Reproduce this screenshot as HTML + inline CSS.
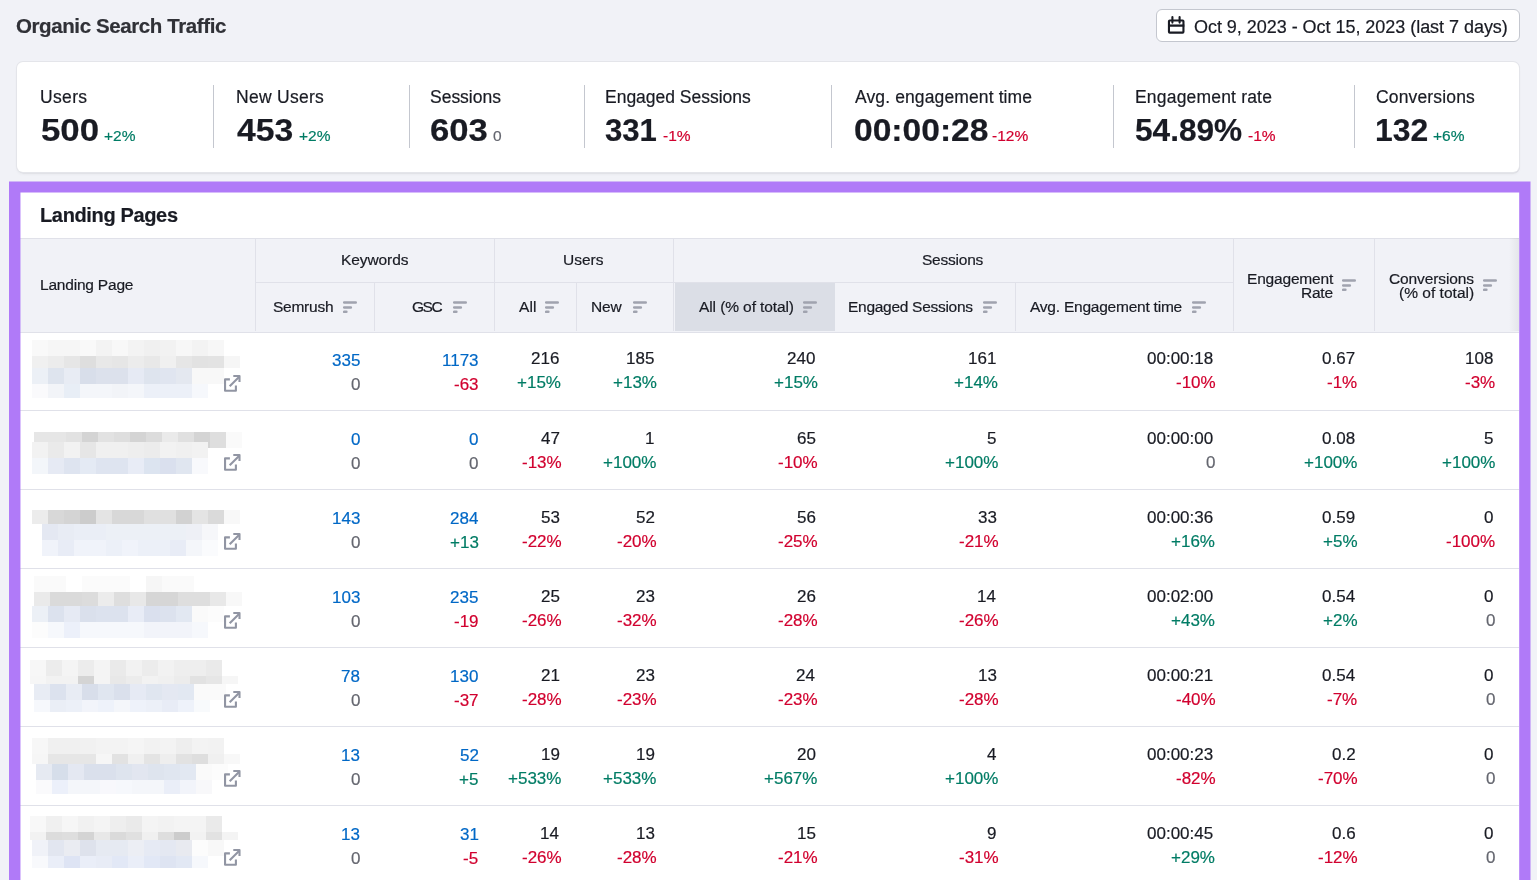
<!DOCTYPE html><html><head><meta charset="utf-8"><style>
html,body{margin:0;padding:0}
body{width:1537px;height:880px;overflow:hidden;position:relative;background:#F1F2F7;font-family:"Liberation Sans",sans-serif}
.a{position:absolute}
.t{position:absolute;white-space:pre;will-change:transform;-webkit-text-stroke:0.2px currentColor}
.bl{display:inline-block;width:0;height:0}
</style></head><body><div class="a" style="left:1156px;top:9px;width:362px;height:31px;border:1px solid #C4C7CF;border-radius:6px;background:#fff"></div><svg class="a" style="left:1162px;top:12px" width="30" height="26" viewBox="0 0 30 26"><g fill="none" stroke="#191B23" stroke-width="2.1"><rect x="6.95" y="8.45" width="14.5" height="12.2" rx="0.8"/><line x1="6.2" y1="13.6" x2="22.3" y2="13.6" stroke-width="2.3"/><line x1="10.4" y1="5" x2="10.4" y2="10.6" stroke-linecap="round"/><line x1="17.6" y1="5" x2="17.6" y2="10.6" stroke-linecap="round"/></g></svg><div class="a" style="left:17px;top:62px;width:1502px;height:110px;border-radius:6px;background:#fff;box-shadow:0 0 0 1px #E4E5EA,0.5px 1px 0 0.5px #D9DAE0,0 2px 3px rgba(25,27,35,.06)"></div><div class="a" style="left:213px;top:85px;width:1px;height:63px;background:#C4C7CF"></div><div class="a" style="left:408.5px;top:85px;width:1px;height:63px;background:#C4C7CF"></div><div class="a" style="left:583.5px;top:85px;width:1px;height:63px;background:#C4C7CF"></div><div class="a" style="left:831px;top:85px;width:1px;height:63px;background:#C4C7CF"></div><div class="a" style="left:1112.5px;top:85px;width:1px;height:63px;background:#C4C7CF"></div><div class="a" style="left:1353.5px;top:85px;width:1px;height:63px;background:#C4C7CF"></div><div class="a" style="left:20px;top:192px;width:1500px;height:700px;background:#fff"></div><div class="a" style="left:20px;top:237.5px;width:1499px;height:93px;background:#F1F2F7;border-top:1px solid #E0E1E9;border-bottom:1px solid #E0E1E9"></div><div class="a" style="left:675px;top:283px;width:160px;height:48px;background:#DBDEE6"></div><div class="a" style="left:1509px;top:238px;width:10px;height:93px;background:linear-gradient(to right,rgba(25,27,35,0),rgba(25,27,35,0.06))"></div><div class="a" style="left:256px;top:282px;width:977px;height:1px;background:#E0E1E9"></div><div class="a" style="left:255.0px;top:238px;width:1px;height:93px;background:#E0E1E9"></div><div class="a" style="left:493.5px;top:238px;width:1px;height:93px;background:#E0E1E9"></div><div class="a" style="left:673.0px;top:238px;width:1px;height:93px;background:#E0E1E9"></div><div class="a" style="left:1232.5px;top:238px;width:1px;height:93px;background:#E0E1E9"></div><div class="a" style="left:1373.5px;top:238px;width:1px;height:93px;background:#E0E1E9"></div><div class="a" style="left:374.0px;top:283px;width:1px;height:48px;background:#E0E1E9"></div><div class="a" style="left:576.0px;top:283px;width:1px;height:48px;background:#E0E1E9"></div><div class="a" style="left:1015.0px;top:283px;width:1px;height:48px;background:#E0E1E9"></div><svg class="a" style="left:343px;top:301px" width="15" height="13" viewBox="0 0 15 13"><g stroke="#A0A3AF" stroke-width="2.5" stroke-linecap="round"><line x1="1.15" y1="1.45" x2="12.75" y2="1.45"/><line x1="1.15" y1="6.4" x2="7.85" y2="6.4"/><line x1="1.15" y1="10.8" x2="3.4" y2="10.8"/></g></svg><svg class="a" style="left:452.8px;top:301px" width="15" height="13" viewBox="0 0 15 13"><g stroke="#A0A3AF" stroke-width="2.5" stroke-linecap="round"><line x1="1.15" y1="1.45" x2="12.75" y2="1.45"/><line x1="1.15" y1="6.4" x2="7.85" y2="6.4"/><line x1="1.15" y1="10.8" x2="3.4" y2="10.8"/></g></svg><svg class="a" style="left:545px;top:301px" width="15" height="13" viewBox="0 0 15 13"><g stroke="#A0A3AF" stroke-width="2.5" stroke-linecap="round"><line x1="1.15" y1="1.45" x2="12.75" y2="1.45"/><line x1="1.15" y1="6.4" x2="7.85" y2="6.4"/><line x1="1.15" y1="10.8" x2="3.4" y2="10.8"/></g></svg><svg class="a" style="left:632.5px;top:301px" width="15" height="13" viewBox="0 0 15 13"><g stroke="#A0A3AF" stroke-width="2.5" stroke-linecap="round"><line x1="1.15" y1="1.45" x2="12.75" y2="1.45"/><line x1="1.15" y1="6.4" x2="7.85" y2="6.4"/><line x1="1.15" y1="10.8" x2="3.4" y2="10.8"/></g></svg><svg class="a" style="left:802.5px;top:301px" width="15" height="13" viewBox="0 0 15 13"><g stroke="#A0A3AF" stroke-width="2.5" stroke-linecap="round"><line x1="1.15" y1="1.45" x2="12.75" y2="1.45"/><line x1="1.15" y1="6.4" x2="7.85" y2="6.4"/><line x1="1.15" y1="10.8" x2="3.4" y2="10.8"/></g></svg><svg class="a" style="left:983px;top:301px" width="15" height="13" viewBox="0 0 15 13"><g stroke="#A0A3AF" stroke-width="2.5" stroke-linecap="round"><line x1="1.15" y1="1.45" x2="12.75" y2="1.45"/><line x1="1.15" y1="6.4" x2="7.85" y2="6.4"/><line x1="1.15" y1="10.8" x2="3.4" y2="10.8"/></g></svg><svg class="a" style="left:1191.5px;top:301px" width="15" height="13" viewBox="0 0 15 13"><g stroke="#A0A3AF" stroke-width="2.5" stroke-linecap="round"><line x1="1.15" y1="1.45" x2="12.75" y2="1.45"/><line x1="1.15" y1="6.4" x2="7.85" y2="6.4"/><line x1="1.15" y1="10.8" x2="3.4" y2="10.8"/></g></svg><svg class="a" style="left:1342px;top:279.4px" width="15" height="13" viewBox="0 0 15 13"><g stroke="#A0A3AF" stroke-width="2.5" stroke-linecap="round"><line x1="1.15" y1="1.45" x2="12.75" y2="1.45"/><line x1="1.15" y1="6.4" x2="7.85" y2="6.4"/><line x1="1.15" y1="10.8" x2="3.4" y2="10.8"/></g></svg><svg class="a" style="left:1482.7px;top:279.4px" width="15" height="13" viewBox="0 0 15 13"><g stroke="#A0A3AF" stroke-width="2.5" stroke-linecap="round"><line x1="1.15" y1="1.45" x2="12.75" y2="1.45"/><line x1="1.15" y1="6.4" x2="7.85" y2="6.4"/><line x1="1.15" y1="10.8" x2="3.4" y2="10.8"/></g></svg><div class="a" style="left:20px;top:410px;width:1499px;height:1px;background:#E0E1E9"></div><div class="a" style="left:32px;top:340px;width:16px;height:16px;background:rgb(249, 249, 249)"></div><div class="a" style="left:48px;top:340px;width:16px;height:16px;background:rgb(246, 246, 246)"></div><div class="a" style="left:64px;top:340px;width:16px;height:16px;background:rgb(246, 246, 246)"></div><div class="a" style="left:80px;top:340px;width:16px;height:16px;background:rgb(249, 249, 249)"></div><div class="a" style="left:96px;top:340px;width:16px;height:16px;background:rgb(243, 243, 243)"></div><div class="a" style="left:112px;top:340px;width:16px;height:16px;background:rgb(248, 248, 248)"></div><div class="a" style="left:128px;top:340px;width:16px;height:16px;background:rgb(243, 243, 243)"></div><div class="a" style="left:144px;top:340px;width:16px;height:16px;background:rgb(240, 240, 240)"></div><div class="a" style="left:160px;top:340px;width:16px;height:16px;background:rgb(242, 242, 242)"></div><div class="a" style="left:176px;top:340px;width:16px;height:16px;background:rgb(247, 247, 247)"></div><div class="a" style="left:192px;top:340px;width:16px;height:16px;background:rgb(243, 243, 243)"></div><div class="a" style="left:208px;top:340px;width:16px;height:16px;background:rgb(247, 247, 247)"></div><div class="a" style="left:32px;top:356px;width:16px;height:12px;background:rgb(240, 240, 240)"></div><div class="a" style="left:48px;top:356px;width:16px;height:12px;background:rgb(236, 236, 236)"></div><div class="a" style="left:64px;top:356px;width:16px;height:12px;background:rgb(230, 230, 230)"></div><div class="a" style="left:80px;top:356px;width:16px;height:12px;background:rgb(222, 222, 222)"></div><div class="a" style="left:96px;top:356px;width:16px;height:12px;background:rgb(232, 232, 232)"></div><div class="a" style="left:112px;top:356px;width:16px;height:12px;background:rgb(230, 230, 230)"></div><div class="a" style="left:128px;top:356px;width:16px;height:12px;background:rgb(236, 236, 236)"></div><div class="a" style="left:144px;top:356px;width:16px;height:12px;background:rgb(232, 232, 232)"></div><div class="a" style="left:160px;top:356px;width:16px;height:12px;background:rgb(240, 240, 240)"></div><div class="a" style="left:176px;top:356px;width:16px;height:12px;background:rgb(230, 230, 230)"></div><div class="a" style="left:192px;top:356px;width:16px;height:12px;background:rgb(226, 226, 226)"></div><div class="a" style="left:208px;top:356px;width:16px;height:12px;background:rgb(227, 227, 227)"></div><div class="a" style="left:224px;top:356px;width:16px;height:12px;background:rgb(246, 246, 246)"></div><div class="a" style="left:32px;top:368px;width:16px;height:16px;background:rgb(236, 240, 246)"></div><div class="a" style="left:48px;top:368px;width:16px;height:16px;background:rgb(222, 228, 238)"></div><div class="a" style="left:64px;top:368px;width:16px;height:16px;background:rgb(232, 236, 244)"></div><div class="a" style="left:80px;top:368px;width:16px;height:16px;background:rgb(216, 222, 234)"></div><div class="a" style="left:96px;top:368px;width:16px;height:16px;background:rgb(220, 225, 236)"></div><div class="a" style="left:112px;top:368px;width:16px;height:16px;background:rgb(220, 225, 236)"></div><div class="a" style="left:128px;top:368px;width:16px;height:16px;background:rgb(230, 234, 244)"></div><div class="a" style="left:144px;top:368px;width:16px;height:16px;background:rgb(222, 228, 238)"></div><div class="a" style="left:160px;top:368px;width:16px;height:16px;background:rgb(224, 229, 240)"></div><div class="a" style="left:176px;top:368px;width:16px;height:16px;background:rgb(228, 232, 240)"></div><div class="a" style="left:192px;top:368px;width:16px;height:16px;background:rgb(248, 248, 248)"></div><div class="a" style="left:208px;top:368px;width:16px;height:16px;background:rgb(248, 248, 248)"></div><div class="a" style="left:32px;top:384px;width:16px;height:14px;background:rgb(250, 250, 252)"></div><div class="a" style="left:48px;top:384px;width:16px;height:14px;background:rgb(242, 244, 248)"></div><div class="a" style="left:64px;top:384px;width:16px;height:14px;background:rgb(232, 238, 246)"></div><div class="a" style="left:80px;top:384px;width:16px;height:14px;background:rgb(244, 246, 250)"></div><div class="a" style="left:96px;top:384px;width:16px;height:14px;background:rgb(244, 246, 250)"></div><div class="a" style="left:112px;top:384px;width:16px;height:14px;background:rgb(242, 244, 248)"></div><div class="a" style="left:128px;top:384px;width:16px;height:14px;background:rgb(244, 246, 250)"></div><div class="a" style="left:144px;top:384px;width:16px;height:14px;background:rgb(236, 240, 248)"></div><div class="a" style="left:160px;top:384px;width:16px;height:14px;background:rgb(236, 240, 248)"></div><div class="a" style="left:176px;top:384px;width:16px;height:14px;background:rgb(236, 240, 248)"></div><div class="a" style="left:192px;top:384px;width:16px;height:14px;background:rgb(246, 248, 252)"></div><svg class="a" style="left:218px;top:368px" width="30" height="30" viewBox="0 0 30 30"><g fill="none" stroke="#9195A3" stroke-width="2.1" stroke-linejoin="round"><path d="M11.9 11.4H7.05V22.7H17.9V17.6"/><path d="M11.7 18.2L21 8.9"/><path d="M15.3 8H21.5V14.1"/></g></svg><div class="a" style="left:20px;top:489px;width:1499px;height:1px;background:#E0E1E9"></div><div class="a" style="left:34px;top:432px;width:16px;height:16px;background:rgb(230, 230, 230)"></div><div class="a" style="left:50px;top:432px;width:16px;height:16px;background:rgb(230, 230, 230)"></div><div class="a" style="left:66px;top:432px;width:16px;height:16px;background:rgb(226, 226, 226)"></div><div class="a" style="left:82px;top:432px;width:16px;height:16px;background:rgb(212, 212, 212)"></div><div class="a" style="left:98px;top:432px;width:16px;height:16px;background:rgb(226, 226, 226)"></div><div class="a" style="left:114px;top:432px;width:16px;height:16px;background:rgb(222, 222, 222)"></div><div class="a" style="left:130px;top:432px;width:16px;height:16px;background:rgb(212, 212, 212)"></div><div class="a" style="left:146px;top:432px;width:16px;height:16px;background:rgb(220, 220, 220)"></div><div class="a" style="left:162px;top:432px;width:16px;height:16px;background:rgb(234, 234, 234)"></div><div class="a" style="left:178px;top:432px;width:16px;height:16px;background:rgb(224, 224, 224)"></div><div class="a" style="left:194px;top:432px;width:16px;height:16px;background:rgb(212, 212, 212)"></div><div class="a" style="left:210px;top:432px;width:16px;height:16px;background:rgb(222, 222, 222)"></div><div class="a" style="left:226px;top:432px;width:16px;height:16px;background:rgb(250, 250, 250)"></div><div class="a" style="left:32px;top:442px;width:16px;height:16px;background:rgb(242, 242, 242)"></div><div class="a" style="left:48px;top:442px;width:16px;height:16px;background:rgb(234, 234, 234)"></div><div class="a" style="left:64px;top:442px;width:16px;height:16px;background:rgb(242, 242, 242)"></div><div class="a" style="left:80px;top:442px;width:16px;height:16px;background:rgb(230, 230, 230)"></div><div class="a" style="left:96px;top:442px;width:16px;height:16px;background:rgb(240, 240, 240)"></div><div class="a" style="left:112px;top:442px;width:16px;height:16px;background:rgb(240, 240, 240)"></div><div class="a" style="left:128px;top:442px;width:16px;height:16px;background:rgb(238, 238, 238)"></div><div class="a" style="left:144px;top:442px;width:16px;height:16px;background:rgb(236, 236, 236)"></div><div class="a" style="left:160px;top:442px;width:16px;height:16px;background:rgb(242, 242, 242)"></div><div class="a" style="left:176px;top:442px;width:16px;height:16px;background:rgb(240, 240, 240)"></div><div class="a" style="left:192px;top:442px;width:16px;height:16px;background:rgb(242, 242, 242)"></div><div class="a" style="left:32px;top:458px;width:16px;height:16px;background:rgb(243, 246, 250)"></div><div class="a" style="left:48px;top:458px;width:16px;height:16px;background:rgb(230, 234, 244)"></div><div class="a" style="left:64px;top:458px;width:16px;height:16px;background:rgb(222, 228, 240)"></div><div class="a" style="left:80px;top:458px;width:16px;height:16px;background:rgb(228, 234, 244)"></div><div class="a" style="left:96px;top:458px;width:16px;height:16px;background:rgb(222, 228, 240)"></div><div class="a" style="left:112px;top:458px;width:16px;height:16px;background:rgb(222, 228, 240)"></div><div class="a" style="left:128px;top:458px;width:16px;height:16px;background:rgb(232, 236, 246)"></div><div class="a" style="left:144px;top:458px;width:16px;height:16px;background:rgb(220, 228, 240)"></div><div class="a" style="left:160px;top:458px;width:16px;height:16px;background:rgb(218, 224, 238)"></div><div class="a" style="left:176px;top:458px;width:16px;height:16px;background:rgb(224, 230, 240)"></div><div class="a" style="left:192px;top:458px;width:16px;height:16px;background:rgb(248, 249, 252)"></div><svg class="a" style="left:218px;top:447px" width="30" height="30" viewBox="0 0 30 30"><g fill="none" stroke="#9195A3" stroke-width="2.1" stroke-linejoin="round"><path d="M11.9 11.4H7.05V22.7H17.9V17.6"/><path d="M11.7 18.2L21 8.9"/><path d="M15.3 8H21.5V14.1"/></g></svg><div class="a" style="left:20px;top:568px;width:1499px;height:1px;background:#E0E1E9"></div><div class="a" style="left:32px;top:510px;width:16px;height:14px;background:rgb(236, 236, 236)"></div><div class="a" style="left:48px;top:510px;width:16px;height:14px;background:rgb(216, 216, 216)"></div><div class="a" style="left:64px;top:510px;width:16px;height:14px;background:rgb(212, 212, 212)"></div><div class="a" style="left:80px;top:510px;width:16px;height:14px;background:rgb(204, 204, 204)"></div><div class="a" style="left:96px;top:510px;width:16px;height:14px;background:rgb(228, 228, 228)"></div><div class="a" style="left:112px;top:510px;width:16px;height:14px;background:rgb(216, 216, 216)"></div><div class="a" style="left:128px;top:510px;width:16px;height:14px;background:rgb(216, 216, 216)"></div><div class="a" style="left:144px;top:510px;width:16px;height:14px;background:rgb(224, 224, 224)"></div><div class="a" style="left:160px;top:510px;width:16px;height:14px;background:rgb(224, 224, 224)"></div><div class="a" style="left:176px;top:510px;width:16px;height:14px;background:rgb(210, 210, 210)"></div><div class="a" style="left:192px;top:510px;width:16px;height:14px;background:rgb(228, 228, 228)"></div><div class="a" style="left:208px;top:510px;width:16px;height:14px;background:rgb(218, 218, 218)"></div><div class="a" style="left:224px;top:510px;width:16px;height:14px;background:rgb(248, 248, 248)"></div><div class="a" style="left:42px;top:524px;width:16px;height:16px;background:rgb(228, 232, 242)"></div><div class="a" style="left:58px;top:524px;width:16px;height:16px;background:rgb(232, 236, 244)"></div><div class="a" style="left:74px;top:524px;width:16px;height:16px;background:rgb(234, 238, 246)"></div><div class="a" style="left:90px;top:524px;width:16px;height:16px;background:rgb(234, 238, 246)"></div><div class="a" style="left:106px;top:524px;width:16px;height:16px;background:rgb(236, 240, 246)"></div><div class="a" style="left:122px;top:524px;width:16px;height:16px;background:rgb(236, 240, 246)"></div><div class="a" style="left:138px;top:524px;width:16px;height:16px;background:rgb(236, 240, 246)"></div><div class="a" style="left:154px;top:524px;width:16px;height:16px;background:rgb(236, 240, 246)"></div><div class="a" style="left:170px;top:524px;width:16px;height:16px;background:rgb(236, 240, 246)"></div><div class="a" style="left:186px;top:524px;width:16px;height:16px;background:rgb(238, 240, 246)"></div><div class="a" style="left:202px;top:524px;width:16px;height:16px;background:rgb(246, 247, 250)"></div><div class="a" style="left:42px;top:540px;width:16px;height:16px;background:rgb(240, 243, 250)"></div><div class="a" style="left:58px;top:540px;width:16px;height:16px;background:rgb(232, 236, 246)"></div><div class="a" style="left:74px;top:540px;width:16px;height:16px;background:rgb(240, 243, 250)"></div><div class="a" style="left:90px;top:540px;width:16px;height:16px;background:rgb(240, 243, 250)"></div><div class="a" style="left:106px;top:540px;width:16px;height:16px;background:rgb(236, 240, 248)"></div><div class="a" style="left:122px;top:540px;width:16px;height:16px;background:rgb(240, 243, 250)"></div><div class="a" style="left:138px;top:540px;width:16px;height:16px;background:rgb(236, 240, 248)"></div><div class="a" style="left:154px;top:540px;width:16px;height:16px;background:rgb(236, 240, 248)"></div><div class="a" style="left:170px;top:540px;width:16px;height:16px;background:rgb(232, 236, 246)"></div><div class="a" style="left:186px;top:540px;width:16px;height:16px;background:rgb(244, 246, 250)"></div><div class="a" style="left:202px;top:540px;width:16px;height:16px;background:rgb(250, 251, 253)"></div><svg class="a" style="left:218px;top:526px" width="30" height="30" viewBox="0 0 30 30"><g fill="none" stroke="#9195A3" stroke-width="2.1" stroke-linejoin="round"><path d="M11.9 11.4H7.05V22.7H17.9V17.6"/><path d="M11.7 18.2L21 8.9"/><path d="M15.3 8H21.5V14.1"/></g></svg><div class="a" style="left:20px;top:647px;width:1499px;height:1px;background:#E0E1E9"></div><div class="a" style="left:34px;top:576px;width:16px;height:16px;background:rgb(250, 250, 250)"></div><div class="a" style="left:50px;top:576px;width:16px;height:16px;background:rgb(250, 250, 250)"></div><div class="a" style="left:66px;top:576px;width:16px;height:16px;background:rgb(255, 255, 255)"></div><div class="a" style="left:82px;top:576px;width:16px;height:16px;background:rgb(251, 251, 251)"></div><div class="a" style="left:98px;top:576px;width:16px;height:16px;background:rgb(251, 251, 251)"></div><div class="a" style="left:114px;top:576px;width:16px;height:16px;background:rgb(251, 251, 251)"></div><div class="a" style="left:130px;top:576px;width:16px;height:16px;background:rgb(255, 255, 255)"></div><div class="a" style="left:146px;top:576px;width:16px;height:16px;background:rgb(246, 246, 246)"></div><div class="a" style="left:162px;top:576px;width:16px;height:16px;background:rgb(250, 250, 250)"></div><div class="a" style="left:178px;top:576px;width:16px;height:16px;background:rgb(250, 250, 250)"></div><div class="a" style="left:194px;top:576px;width:16px;height:16px;background:rgb(255, 255, 255)"></div><div class="a" style="left:210px;top:576px;width:16px;height:16px;background:rgb(255, 255, 255)"></div><div class="a" style="left:34px;top:592px;width:16px;height:14px;background:rgb(234, 234, 234)"></div><div class="a" style="left:50px;top:592px;width:16px;height:14px;background:rgb(218, 218, 218)"></div><div class="a" style="left:66px;top:592px;width:16px;height:14px;background:rgb(218, 218, 218)"></div><div class="a" style="left:82px;top:592px;width:16px;height:14px;background:rgb(220, 220, 220)"></div><div class="a" style="left:98px;top:592px;width:16px;height:14px;background:rgb(236, 236, 236)"></div><div class="a" style="left:114px;top:592px;width:16px;height:14px;background:rgb(222, 222, 222)"></div><div class="a" style="left:130px;top:592px;width:16px;height:14px;background:rgb(232, 232, 232)"></div><div class="a" style="left:146px;top:592px;width:16px;height:14px;background:rgb(214, 214, 214)"></div><div class="a" style="left:162px;top:592px;width:16px;height:14px;background:rgb(214, 214, 214)"></div><div class="a" style="left:178px;top:592px;width:16px;height:14px;background:rgb(222, 222, 222)"></div><div class="a" style="left:194px;top:592px;width:16px;height:14px;background:rgb(222, 222, 222)"></div><div class="a" style="left:210px;top:592px;width:16px;height:14px;background:rgb(232, 232, 232)"></div><div class="a" style="left:226px;top:592px;width:16px;height:14px;background:rgb(248, 248, 248)"></div><div class="a" style="left:32px;top:606px;width:16px;height:16px;background:rgb(236, 240, 246)"></div><div class="a" style="left:48px;top:606px;width:16px;height:16px;background:rgb(220, 226, 238)"></div><div class="a" style="left:64px;top:606px;width:16px;height:16px;background:rgb(230, 234, 244)"></div><div class="a" style="left:80px;top:606px;width:16px;height:16px;background:rgb(218, 224, 236)"></div><div class="a" style="left:96px;top:606px;width:16px;height:16px;background:rgb(220, 226, 238)"></div><div class="a" style="left:112px;top:606px;width:16px;height:16px;background:rgb(220, 226, 238)"></div><div class="a" style="left:128px;top:606px;width:16px;height:16px;background:rgb(232, 236, 246)"></div><div class="a" style="left:144px;top:606px;width:16px;height:16px;background:rgb(218, 224, 238)"></div><div class="a" style="left:160px;top:606px;width:16px;height:16px;background:rgb(220, 226, 238)"></div><div class="a" style="left:176px;top:606px;width:16px;height:16px;background:rgb(226, 232, 242)"></div><div class="a" style="left:192px;top:606px;width:16px;height:16px;background:rgb(250, 250, 250)"></div><div class="a" style="left:208px;top:606px;width:16px;height:16px;background:rgb(252, 252, 252)"></div><div class="a" style="left:32px;top:622px;width:16px;height:16px;background:rgb(252, 252, 252)"></div><div class="a" style="left:48px;top:622px;width:16px;height:16px;background:rgb(246, 248, 252)"></div><div class="a" style="left:64px;top:622px;width:16px;height:16px;background:rgb(236, 240, 250)"></div><div class="a" style="left:80px;top:622px;width:16px;height:16px;background:rgb(246, 248, 252)"></div><div class="a" style="left:96px;top:622px;width:16px;height:16px;background:rgb(246, 248, 252)"></div><div class="a" style="left:112px;top:622px;width:16px;height:16px;background:rgb(246, 248, 252)"></div><div class="a" style="left:128px;top:622px;width:16px;height:16px;background:rgb(246, 248, 252)"></div><div class="a" style="left:144px;top:622px;width:16px;height:16px;background:rgb(242, 244, 250)"></div><div class="a" style="left:160px;top:622px;width:16px;height:16px;background:rgb(242, 244, 250)"></div><div class="a" style="left:176px;top:622px;width:16px;height:16px;background:rgb(242, 244, 250)"></div><div class="a" style="left:192px;top:622px;width:16px;height:16px;background:rgb(246, 248, 252)"></div><svg class="a" style="left:218px;top:605px" width="30" height="30" viewBox="0 0 30 30"><g fill="none" stroke="#9195A3" stroke-width="2.1" stroke-linejoin="round"><path d="M11.9 11.4H7.05V22.7H17.9V17.6"/><path d="M11.7 18.2L21 8.9"/><path d="M15.3 8H21.5V14.1"/></g></svg><div class="a" style="left:20px;top:726px;width:1499px;height:1px;background:#E0E1E9"></div><div class="a" style="left:30px;top:660px;width:16px;height:16px;background:rgb(247, 247, 247)"></div><div class="a" style="left:46px;top:660px;width:16px;height:16px;background:rgb(236, 236, 236)"></div><div class="a" style="left:62px;top:660px;width:16px;height:16px;background:rgb(244, 244, 244)"></div><div class="a" style="left:78px;top:660px;width:16px;height:16px;background:rgb(236, 236, 236)"></div><div class="a" style="left:94px;top:660px;width:16px;height:16px;background:rgb(244, 244, 244)"></div><div class="a" style="left:110px;top:660px;width:16px;height:16px;background:rgb(234, 234, 234)"></div><div class="a" style="left:126px;top:660px;width:16px;height:16px;background:rgb(242, 242, 242)"></div><div class="a" style="left:142px;top:660px;width:16px;height:16px;background:rgb(236, 236, 236)"></div><div class="a" style="left:158px;top:660px;width:16px;height:16px;background:rgb(242, 242, 242)"></div><div class="a" style="left:174px;top:660px;width:16px;height:16px;background:rgb(238, 238, 238)"></div><div class="a" style="left:190px;top:660px;width:16px;height:16px;background:rgb(238, 238, 238)"></div><div class="a" style="left:206px;top:660px;width:16px;height:16px;background:rgb(234, 234, 234)"></div><div class="a" style="left:30px;top:676px;width:16px;height:8px;background:rgb(246, 246, 246)"></div><div class="a" style="left:46px;top:676px;width:16px;height:8px;background:rgb(242, 242, 242)"></div><div class="a" style="left:62px;top:676px;width:16px;height:8px;background:rgb(242, 242, 242)"></div><div class="a" style="left:78px;top:676px;width:16px;height:8px;background:rgb(212, 212, 212)"></div><div class="a" style="left:94px;top:676px;width:16px;height:8px;background:rgb(244, 244, 244)"></div><div class="a" style="left:110px;top:676px;width:16px;height:8px;background:rgb(232, 232, 232)"></div><div class="a" style="left:126px;top:676px;width:16px;height:8px;background:rgb(236, 236, 236)"></div><div class="a" style="left:142px;top:676px;width:16px;height:8px;background:rgb(242, 242, 242)"></div><div class="a" style="left:158px;top:676px;width:16px;height:8px;background:rgb(240, 240, 240)"></div><div class="a" style="left:174px;top:676px;width:16px;height:8px;background:rgb(236, 236, 236)"></div><div class="a" style="left:190px;top:676px;width:16px;height:8px;background:rgb(226, 226, 226)"></div><div class="a" style="left:206px;top:676px;width:16px;height:8px;background:rgb(230, 230, 230)"></div><div class="a" style="left:222px;top:676px;width:16px;height:8px;background:rgb(246, 246, 246)"></div><div class="a" style="left:34px;top:684px;width:16px;height:16px;background:rgb(232, 236, 244)"></div><div class="a" style="left:50px;top:684px;width:16px;height:16px;background:rgb(220, 226, 238)"></div><div class="a" style="left:66px;top:684px;width:16px;height:16px;background:rgb(232, 236, 244)"></div><div class="a" style="left:82px;top:684px;width:16px;height:16px;background:rgb(216, 222, 234)"></div><div class="a" style="left:98px;top:684px;width:16px;height:16px;background:rgb(224, 230, 240)"></div><div class="a" style="left:114px;top:684px;width:16px;height:16px;background:rgb(218, 224, 236)"></div><div class="a" style="left:130px;top:684px;width:16px;height:16px;background:rgb(230, 234, 244)"></div><div class="a" style="left:146px;top:684px;width:16px;height:16px;background:rgb(224, 230, 240)"></div><div class="a" style="left:162px;top:684px;width:16px;height:16px;background:rgb(228, 232, 242)"></div><div class="a" style="left:178px;top:684px;width:16px;height:16px;background:rgb(226, 232, 242)"></div><div class="a" style="left:194px;top:684px;width:16px;height:16px;background:rgb(250, 250, 250)"></div><div class="a" style="left:210px;top:684px;width:16px;height:16px;background:rgb(250, 250, 250)"></div><div class="a" style="left:34px;top:700px;width:16px;height:12px;background:rgb(246, 248, 252)"></div><div class="a" style="left:50px;top:700px;width:16px;height:12px;background:rgb(234, 238, 246)"></div><div class="a" style="left:66px;top:700px;width:16px;height:12px;background:rgb(236, 240, 248)"></div><div class="a" style="left:82px;top:700px;width:16px;height:12px;background:rgb(242, 244, 250)"></div><div class="a" style="left:98px;top:700px;width:16px;height:12px;background:rgb(238, 242, 250)"></div><div class="a" style="left:114px;top:700px;width:16px;height:12px;background:rgb(244, 246, 250)"></div><div class="a" style="left:130px;top:700px;width:16px;height:12px;background:rgb(238, 242, 250)"></div><div class="a" style="left:146px;top:700px;width:16px;height:12px;background:rgb(236, 240, 248)"></div><div class="a" style="left:162px;top:700px;width:16px;height:12px;background:rgb(232, 236, 246)"></div><div class="a" style="left:178px;top:700px;width:16px;height:12px;background:rgb(238, 242, 250)"></div><div class="a" style="left:194px;top:700px;width:16px;height:12px;background:rgb(248, 250, 252)"></div><svg class="a" style="left:218px;top:684px" width="30" height="30" viewBox="0 0 30 30"><g fill="none" stroke="#9195A3" stroke-width="2.1" stroke-linejoin="round"><path d="M11.9 11.4H7.05V22.7H17.9V17.6"/><path d="M11.7 18.2L21 8.9"/><path d="M15.3 8H21.5V14.1"/></g></svg><div class="a" style="left:20px;top:805px;width:1499px;height:1px;background:#E0E1E9"></div><div class="a" style="left:32px;top:738px;width:16px;height:16px;background:rgb(247, 247, 247)"></div><div class="a" style="left:48px;top:738px;width:16px;height:16px;background:rgb(240, 240, 240)"></div><div class="a" style="left:64px;top:738px;width:16px;height:16px;background:rgb(240, 240, 240)"></div><div class="a" style="left:80px;top:738px;width:16px;height:16px;background:rgb(241, 241, 241)"></div><div class="a" style="left:96px;top:738px;width:16px;height:16px;background:rgb(243, 243, 243)"></div><div class="a" style="left:112px;top:738px;width:16px;height:16px;background:rgb(243, 243, 243)"></div><div class="a" style="left:128px;top:738px;width:16px;height:16px;background:rgb(245, 245, 245)"></div><div class="a" style="left:144px;top:738px;width:16px;height:16px;background:rgb(242, 242, 242)"></div><div class="a" style="left:160px;top:738px;width:16px;height:16px;background:rgb(243, 243, 243)"></div><div class="a" style="left:176px;top:738px;width:16px;height:16px;background:rgb(238, 238, 238)"></div><div class="a" style="left:192px;top:738px;width:16px;height:16px;background:rgb(243, 243, 243)"></div><div class="a" style="left:208px;top:738px;width:16px;height:16px;background:rgb(242, 242, 242)"></div><div class="a" style="left:32px;top:754px;width:16px;height:10px;background:rgb(246, 246, 246)"></div><div class="a" style="left:48px;top:754px;width:16px;height:10px;background:rgb(230, 230, 230)"></div><div class="a" style="left:64px;top:754px;width:16px;height:10px;background:rgb(230, 230, 230)"></div><div class="a" style="left:80px;top:754px;width:16px;height:10px;background:rgb(230, 230, 230)"></div><div class="a" style="left:96px;top:754px;width:16px;height:10px;background:rgb(246, 246, 246)"></div><div class="a" style="left:112px;top:754px;width:16px;height:10px;background:rgb(226, 226, 226)"></div><div class="a" style="left:128px;top:754px;width:16px;height:10px;background:rgb(240, 240, 240)"></div><div class="a" style="left:144px;top:754px;width:16px;height:10px;background:rgb(228, 228, 228)"></div><div class="a" style="left:160px;top:754px;width:16px;height:10px;background:rgb(238, 238, 238)"></div><div class="a" style="left:176px;top:754px;width:16px;height:10px;background:rgb(226, 226, 226)"></div><div class="a" style="left:192px;top:754px;width:16px;height:10px;background:rgb(222, 222, 222)"></div><div class="a" style="left:208px;top:754px;width:16px;height:10px;background:rgb(240, 240, 240)"></div><div class="a" style="left:224px;top:754px;width:16px;height:10px;background:rgb(248, 248, 248)"></div><div class="a" style="left:36px;top:764px;width:16px;height:16px;background:rgb(230, 234, 242)"></div><div class="a" style="left:52px;top:764px;width:16px;height:16px;background:rgb(214, 222, 234)"></div><div class="a" style="left:68px;top:764px;width:16px;height:16px;background:rgb(228, 232, 242)"></div><div class="a" style="left:84px;top:764px;width:16px;height:16px;background:rgb(218, 224, 236)"></div><div class="a" style="left:100px;top:764px;width:16px;height:16px;background:rgb(218, 224, 236)"></div><div class="a" style="left:116px;top:764px;width:16px;height:16px;background:rgb(222, 228, 238)"></div><div class="a" style="left:132px;top:764px;width:16px;height:16px;background:rgb(226, 230, 240)"></div><div class="a" style="left:148px;top:764px;width:16px;height:16px;background:rgb(222, 228, 238)"></div><div class="a" style="left:164px;top:764px;width:16px;height:16px;background:rgb(224, 230, 240)"></div><div class="a" style="left:180px;top:764px;width:16px;height:16px;background:rgb(226, 232, 242)"></div><div class="a" style="left:196px;top:764px;width:16px;height:16px;background:rgb(250, 250, 250)"></div><div class="a" style="left:212px;top:764px;width:16px;height:16px;background:rgb(252, 252, 252)"></div><div class="a" style="left:36px;top:780px;width:16px;height:14px;background:rgb(250, 250, 252)"></div><div class="a" style="left:52px;top:780px;width:16px;height:14px;background:rgb(236, 240, 250)"></div><div class="a" style="left:68px;top:780px;width:16px;height:14px;background:rgb(244, 246, 250)"></div><div class="a" style="left:84px;top:780px;width:16px;height:14px;background:rgb(244, 246, 250)"></div><div class="a" style="left:100px;top:780px;width:16px;height:14px;background:rgb(248, 248, 252)"></div><div class="a" style="left:116px;top:780px;width:16px;height:14px;background:rgb(246, 248, 252)"></div><div class="a" style="left:132px;top:780px;width:16px;height:14px;background:rgb(244, 246, 250)"></div><div class="a" style="left:148px;top:780px;width:16px;height:14px;background:rgb(244, 246, 250)"></div><div class="a" style="left:164px;top:780px;width:16px;height:14px;background:rgb(234, 238, 248)"></div><div class="a" style="left:180px;top:780px;width:16px;height:14px;background:rgb(242, 244, 250)"></div><div class="a" style="left:196px;top:780px;width:16px;height:14px;background:rgb(248, 248, 250)"></div><svg class="a" style="left:218px;top:763px" width="30" height="30" viewBox="0 0 30 30"><g fill="none" stroke="#9195A3" stroke-width="2.1" stroke-linejoin="round"><path d="M11.9 11.4H7.05V22.7H17.9V17.6"/><path d="M11.7 18.2L21 8.9"/><path d="M15.3 8H21.5V14.1"/></g></svg><div class="a" style="left:20px;top:884px;width:1499px;height:1px;background:#E0E1E9"></div><div class="a" style="left:30px;top:816px;width:16px;height:16px;background:rgb(248, 248, 248)"></div><div class="a" style="left:46px;top:816px;width:16px;height:16px;background:rgb(240, 240, 240)"></div><div class="a" style="left:62px;top:816px;width:16px;height:16px;background:rgb(246, 246, 246)"></div><div class="a" style="left:78px;top:816px;width:16px;height:16px;background:rgb(241, 241, 241)"></div><div class="a" style="left:94px;top:816px;width:16px;height:16px;background:rgb(244, 244, 244)"></div><div class="a" style="left:110px;top:816px;width:16px;height:16px;background:rgb(238, 238, 238)"></div><div class="a" style="left:126px;top:816px;width:16px;height:16px;background:rgb(234, 234, 234)"></div><div class="a" style="left:142px;top:816px;width:16px;height:16px;background:rgb(244, 244, 244)"></div><div class="a" style="left:158px;top:816px;width:16px;height:16px;background:rgb(242, 242, 242)"></div><div class="a" style="left:174px;top:816px;width:16px;height:16px;background:rgb(244, 244, 244)"></div><div class="a" style="left:190px;top:816px;width:16px;height:16px;background:rgb(244, 244, 244)"></div><div class="a" style="left:206px;top:816px;width:16px;height:16px;background:rgb(234, 234, 234)"></div><div class="a" style="left:30px;top:832px;width:16px;height:8px;background:rgb(242, 242, 242)"></div><div class="a" style="left:46px;top:832px;width:16px;height:8px;background:rgb(220, 220, 220)"></div><div class="a" style="left:62px;top:832px;width:16px;height:8px;background:rgb(222, 222, 222)"></div><div class="a" style="left:78px;top:832px;width:16px;height:8px;background:rgb(212, 212, 212)"></div><div class="a" style="left:94px;top:832px;width:16px;height:8px;background:rgb(232, 232, 232)"></div><div class="a" style="left:110px;top:832px;width:16px;height:8px;background:rgb(218, 218, 218)"></div><div class="a" style="left:126px;top:832px;width:16px;height:8px;background:rgb(224, 224, 224)"></div><div class="a" style="left:142px;top:832px;width:16px;height:8px;background:rgb(240, 240, 240)"></div><div class="a" style="left:158px;top:832px;width:16px;height:8px;background:rgb(222, 222, 222)"></div><div class="a" style="left:174px;top:832px;width:16px;height:8px;background:rgb(204, 204, 204)"></div><div class="a" style="left:190px;top:832px;width:16px;height:8px;background:rgb(242, 242, 242)"></div><div class="a" style="left:206px;top:832px;width:16px;height:8px;background:rgb(226, 226, 226)"></div><div class="a" style="left:222px;top:832px;width:16px;height:8px;background:rgb(244, 244, 244)"></div><div class="a" style="left:32px;top:840px;width:16px;height:16px;background:rgb(240, 242, 248)"></div><div class="a" style="left:48px;top:840px;width:16px;height:16px;background:rgb(226, 230, 240)"></div><div class="a" style="left:64px;top:840px;width:16px;height:16px;background:rgb(234, 236, 242)"></div><div class="a" style="left:80px;top:840px;width:16px;height:16px;background:rgb(222, 226, 236)"></div><div class="a" style="left:96px;top:840px;width:16px;height:16px;background:rgb(230, 234, 242)"></div><div class="a" style="left:112px;top:840px;width:16px;height:16px;background:rgb(230, 234, 242)"></div><div class="a" style="left:128px;top:840px;width:16px;height:16px;background:rgb(236, 238, 244)"></div><div class="a" style="left:144px;top:840px;width:16px;height:16px;background:rgb(230, 234, 244)"></div><div class="a" style="left:160px;top:840px;width:16px;height:16px;background:rgb(228, 232, 242)"></div><div class="a" style="left:176px;top:840px;width:16px;height:16px;background:rgb(232, 234, 240)"></div><div class="a" style="left:192px;top:840px;width:16px;height:16px;background:rgb(252, 252, 252)"></div><div class="a" style="left:208px;top:840px;width:16px;height:16px;background:rgb(248, 248, 248)"></div><div class="a" style="left:32px;top:856px;width:16px;height:12px;background:rgb(248, 249, 252)"></div><div class="a" style="left:48px;top:856px;width:16px;height:12px;background:rgb(234, 238, 248)"></div><div class="a" style="left:64px;top:856px;width:16px;height:12px;background:rgb(222, 228, 244)"></div><div class="a" style="left:80px;top:856px;width:16px;height:12px;background:rgb(234, 238, 248)"></div><div class="a" style="left:96px;top:856px;width:16px;height:12px;background:rgb(232, 236, 246)"></div><div class="a" style="left:112px;top:856px;width:16px;height:12px;background:rgb(226, 232, 246)"></div><div class="a" style="left:128px;top:856px;width:16px;height:12px;background:rgb(234, 238, 248)"></div><div class="a" style="left:144px;top:856px;width:16px;height:12px;background:rgb(226, 232, 246)"></div><div class="a" style="left:160px;top:856px;width:16px;height:12px;background:rgb(222, 228, 242)"></div><div class="a" style="left:176px;top:856px;width:16px;height:12px;background:rgb(226, 232, 244)"></div><div class="a" style="left:192px;top:856px;width:16px;height:12px;background:rgb(246, 248, 252)"></div><svg class="a" style="left:218px;top:842px" width="30" height="30" viewBox="0 0 30 30"><g fill="none" stroke="#9195A3" stroke-width="2.1" stroke-linejoin="round"><path d="M11.9 11.4H7.05V22.7H17.9V17.6"/><path d="M11.7 18.2L21 8.9"/><path d="M15.3 8H21.5V14.1"/></g></svg><svg class="a" style="left:0;top:0" width="1537" height="880" viewBox="0 0 1537 880"><path fill="#B07AF8" fill-rule="evenodd" d="M9 181.6H1530.5V880H9Z M20.45 192.5H1519.2V880H20.45Z"/></svg><div class="t" id="title" style="top:16.00px;font-size:20.5px;font-weight:bold;color:#303137;line-height:20.5px;letter-spacing:-0.400px;left:15.66px;">Organic Search Traffic<i class="bl"></i></div><div class="t" id="date" style="top:18.00px;font-size:18px;font-weight:normal;color:#191B23;line-height:18px;letter-spacing:-0.034px;left:1193.68px;">Oct 9, 2023 - Oct 15, 2023 (last 7 days)<i class="bl"></i></div><div class="t" id="s0l" style="top:88.82px;font-size:17.5px;font-weight:normal;color:#191B23;line-height:17.5px;letter-spacing:0.339px;left:39.59px;">Users<i class="bl"></i></div><div class="t" id="s0v" style="top:115.01px;font-size:31px;font-weight:bold;color:#191B23;line-height:31px;transform:scaleX(1.1233);transform-origin:0 0;left:40.72px;">500<i class="bl"></i></div><div class="t" id="s0d" style="top:128.01px;font-size:15.5px;font-weight:normal;color:#007C65;line-height:15.5px;left:103.65px;">+2%<i class="bl"></i></div><div class="t" id="s1l" style="top:88.82px;font-size:17.5px;font-weight:normal;color:#191B23;line-height:17.5px;letter-spacing:0.274px;left:235.65px;">New Users<i class="bl"></i></div><div class="t" id="s1v" style="top:115.01px;font-size:31px;font-weight:bold;color:#191B23;line-height:31px;transform:scaleX(1.0869);transform-origin:0 0;left:236.70px;">453<i class="bl"></i></div><div class="t" id="s1d" style="top:128.01px;font-size:15.5px;font-weight:normal;color:#007C65;line-height:15.5px;left:298.63px;">+2%<i class="bl"></i></div><div class="t" id="s2l" style="top:88.82px;font-size:17.5px;font-weight:normal;color:#191B23;line-height:17.5px;letter-spacing:-0.011px;left:429.57px;">Sessions<i class="bl"></i></div><div class="t" id="s2v" style="top:115.01px;font-size:31px;font-weight:bold;color:#191B23;line-height:31px;transform:scaleX(1.1180);transform-origin:0 0;left:429.65px;">603<i class="bl"></i></div><div class="t" id="s2d" style="top:128.01px;font-size:15.5px;font-weight:normal;color:#64666F;line-height:15.5px;left:492.61px;">0<i class="bl"></i></div><div class="t" id="s3l" style="top:88.82px;font-size:17.5px;font-weight:normal;color:#191B23;line-height:17.5px;letter-spacing:-0.015px;left:604.73px;">Engaged Sessions<i class="bl"></i></div><div class="t" id="s3v" style="top:115.01px;font-size:31px;font-weight:bold;color:#191B23;line-height:31px;transform:scaleX(1.0039);transform-origin:0 0;left:604.70px;">331<i class="bl"></i></div><div class="t" id="s3d" style="top:128.01px;font-size:15.5px;font-weight:normal;color:#D1002F;line-height:15.5px;left:662.69px;">-1%<i class="bl"></i></div><div class="t" id="s4l" style="top:88.82px;font-size:17.5px;font-weight:normal;color:#191B23;line-height:17.5px;letter-spacing:0.119px;left:854.60px;">Avg. engagement time<i class="bl"></i></div><div class="t" id="s4v" style="top:115.01px;font-size:31px;font-weight:bold;color:#191B23;line-height:31px;transform:scaleX(1.0836);transform-origin:0 0;left:853.73px;">00:00:28<i class="bl"></i></div><div class="t" id="s4d" style="top:128.01px;font-size:15.5px;font-weight:normal;color:#D1002F;line-height:15.5px;left:991.74px;">-12%<i class="bl"></i></div><div class="t" id="s5l" style="top:88.82px;font-size:17.5px;font-weight:normal;color:#191B23;line-height:17.5px;letter-spacing:0.189px;left:1134.65px;">Engagement rate<i class="bl"></i></div><div class="t" id="s5v" style="top:115.01px;font-size:31px;font-weight:bold;color:#191B23;line-height:31px;transform:scaleX(1.0194);transform-origin:0 0;left:1134.64px;">54.89%<i class="bl"></i></div><div class="t" id="s5d" style="top:128.01px;font-size:15.5px;font-weight:normal;color:#D1002F;line-height:15.5px;left:1247.50px;">-1%<i class="bl"></i></div><div class="t" id="s6l" style="top:88.82px;font-size:17.5px;font-weight:normal;color:#191B23;line-height:17.5px;letter-spacing:0.155px;left:1375.57px;">Conversions<i class="bl"></i></div><div class="t" id="s6v" style="top:115.01px;font-size:31px;font-weight:bold;color:#191B23;line-height:31px;transform:scaleX(1.0287);transform-origin:0 0;left:1374.50px;">132<i class="bl"></i></div><div class="t" id="s6d" style="top:128.01px;font-size:15.5px;font-weight:normal;color:#007C65;line-height:15.5px;left:1432.51px;">+6%<i class="bl"></i></div><div class="t" id="lp" style="top:204.90px;font-size:20px;font-weight:bold;color:#191B23;line-height:20px;letter-spacing:-0.354px;left:39.63px;">Landing Pages<i class="bl"></i></div><div class="t" id="h_lp" style="top:277.11px;font-size:15.5px;font-weight:normal;color:#191B23;line-height:15.5px;letter-spacing:-0.200px;left:39.57px;">Landing Page<i class="bl"></i></div><div class="t" id="h_kw" style="top:252.11px;font-size:15.5px;font-weight:normal;color:#191B23;line-height:15.5px;letter-spacing:-0.088px;left:340.50px;">Keywords<i class="bl"></i></div><div class="t" id="h_us" style="top:252.11px;font-size:15.5px;font-weight:normal;color:#191B23;line-height:15.5px;letter-spacing:0.017px;left:562.63px;">Users<i class="bl"></i></div><div class="t" id="h_se" style="top:252.11px;font-size:15.5px;font-weight:normal;color:#191B23;line-height:15.5px;letter-spacing:-0.220px;left:921.64px;">Sessions<i class="bl"></i></div><div class="t" id="h_s0" style="top:298.81px;font-size:15.5px;font-weight:normal;color:#191B23;line-height:15.5px;letter-spacing:-0.249px;left:272.63px;">Semrush<i class="bl"></i></div><div class="t" id="h_s1" style="top:298.81px;font-size:15.5px;font-weight:normal;color:#191B23;line-height:15.5px;letter-spacing:-1.475px;left:411.65px;">GSC<i class="bl"></i></div><div class="t" id="h_s2" style="top:298.81px;font-size:15.5px;font-weight:normal;color:#191B23;line-height:15.5px;letter-spacing:0.114px;left:518.62px;">All<i class="bl"></i></div><div class="t" id="h_s3" style="top:298.81px;font-size:15.5px;font-weight:normal;color:#191B23;line-height:15.5px;letter-spacing:-0.140px;left:590.58px;">New<i class="bl"></i></div><div class="t" id="h_s4" style="top:298.81px;font-size:15.5px;font-weight:normal;color:#191B23;line-height:15.5px;letter-spacing:-0.097px;left:698.64px;">All (% of total)<i class="bl"></i></div><div class="t" id="h_s5" style="top:298.81px;font-size:15.5px;font-weight:normal;color:#191B23;line-height:15.5px;letter-spacing:-0.284px;left:847.79px;">Engaged Sessions<i class="bl"></i></div><div class="t" id="h_s6" style="top:298.81px;font-size:15.5px;font-weight:normal;color:#191B23;line-height:15.5px;letter-spacing:-0.229px;left:1029.60px;">Avg. Engagement time<i class="bl"></i></div><div class="t" id="h_er1" style="top:270.61px;font-size:15.5px;font-weight:normal;color:#191B23;line-height:15.5px;letter-spacing:-0.186px;right:204.26px;">Engagement<i class="bl"></i></div><div class="t" id="h_er2" style="top:285.41px;font-size:15.5px;font-weight:normal;color:#191B23;line-height:15.5px;letter-spacing:-0.229px;right:204.38px;">Rate<i class="bl"></i></div><div class="t" id="h_cv1" style="top:270.61px;font-size:15.5px;font-weight:normal;color:#191B23;line-height:15.5px;letter-spacing:-0.114px;right:63.60px;">Conversions<i class="bl"></i></div><div class="t" id="h_cv2" style="top:285.41px;font-size:15.5px;font-weight:normal;color:#191B23;line-height:15.5px;letter-spacing:0.022px;right:63.16px;">(% of total)<i class="bl"></i></div><div class="t" id="d0_0a" style="top:352.00px;font-size:17px;font-weight:normal;color:#0068C6;line-height:17px;right:1177.03px;">335<i class="bl"></i></div><div class="t" id="d0_0b" style="top:375.82px;font-size:17px;font-weight:normal;color:#64666F;line-height:17px;right:1176.85px;">0<i class="bl"></i></div><div class="t" id="d0_1a" style="top:352.00px;font-size:17px;font-weight:normal;color:#0068C6;line-height:17px;right:1058.86px;">1173<i class="bl"></i></div><div class="t" id="d0_1b" style="top:375.82px;font-size:17px;font-weight:normal;color:#D1002F;line-height:17px;right:1058.80px;">-63<i class="bl"></i></div><div class="t" id="d0_2a" style="top:349.91px;font-size:17px;font-weight:normal;color:#191B23;line-height:17px;right:978.02px;">216<i class="bl"></i></div><div class="t" id="d0_2b" style="top:374.00px;font-size:17px;font-weight:normal;color:#007C65;line-height:17px;right:976.33px;">+15%<i class="bl"></i></div><div class="t" id="d0_3a" style="top:349.91px;font-size:17px;font-weight:normal;color:#191B23;line-height:17px;right:882.90px;">185<i class="bl"></i></div><div class="t" id="d0_3b" style="top:374.00px;font-size:17px;font-weight:normal;color:#007C65;line-height:17px;right:880.48px;">+13%<i class="bl"></i></div><div class="t" id="d0_4a" style="top:349.91px;font-size:17px;font-weight:normal;color:#191B23;line-height:17px;right:722.06px;">240<i class="bl"></i></div><div class="t" id="d0_4b" style="top:374.00px;font-size:17px;font-weight:normal;color:#007C65;line-height:17px;right:719.48px;">+15%<i class="bl"></i></div><div class="t" id="d0_5a" style="top:349.91px;font-size:17px;font-weight:normal;color:#191B23;line-height:17px;right:541.02px;">161<i class="bl"></i></div><div class="t" id="d0_5b" style="top:374.00px;font-size:17px;font-weight:normal;color:#007C65;line-height:17px;right:539.54px;">+14%<i class="bl"></i></div><div class="t" id="d0_6a" style="top:349.91px;font-size:17px;font-weight:normal;color:#191B23;line-height:17px;right:324.19px;">00:00:18<i class="bl"></i></div><div class="t" id="d0_6b" style="top:374.00px;font-size:17px;font-weight:normal;color:#D1002F;line-height:17px;right:321.63px;">-10%<i class="bl"></i></div><div class="t" id="d0_7a" style="top:349.91px;font-size:17px;font-weight:normal;color:#191B23;line-height:17px;right:182.34px;">0.67<i class="bl"></i></div><div class="t" id="d0_7b" style="top:374.00px;font-size:17px;font-weight:normal;color:#D1002F;line-height:17px;right:180.07px;">-1%<i class="bl"></i></div><div class="t" id="d0_8a" style="top:349.91px;font-size:17px;font-weight:normal;color:#191B23;line-height:17px;right:44.12px;">108<i class="bl"></i></div><div class="t" id="d0_8b" style="top:374.00px;font-size:17px;font-weight:normal;color:#D1002F;line-height:17px;right:42.12px;">-3%<i class="bl"></i></div><div class="t" id="d1_0a" style="top:431.00px;font-size:17px;font-weight:normal;color:#0068C6;line-height:17px;right:1177.03px;">0<i class="bl"></i></div><div class="t" id="d1_0b" style="top:454.82px;font-size:17px;font-weight:normal;color:#64666F;line-height:17px;right:1176.85px;">0<i class="bl"></i></div><div class="t" id="d1_1a" style="top:431.00px;font-size:17px;font-weight:normal;color:#0068C6;line-height:17px;right:1058.93px;">0<i class="bl"></i></div><div class="t" id="d1_1b" style="top:454.82px;font-size:17px;font-weight:normal;color:#64666F;line-height:17px;right:1058.98px;">0<i class="bl"></i></div><div class="t" id="d1_2a" style="top:429.91px;font-size:17px;font-weight:normal;color:#191B23;line-height:17px;right:977.59px;">47<i class="bl"></i></div><div class="t" id="d1_2b" style="top:453.91px;font-size:17px;font-weight:normal;color:#D1002F;line-height:17px;right:975.71px;">-13%<i class="bl"></i></div><div class="t" id="d1_3a" style="top:429.91px;font-size:17px;font-weight:normal;color:#191B23;line-height:17px;right:882.91px;">1<i class="bl"></i></div><div class="t" id="d1_3b" style="top:453.91px;font-size:17px;font-weight:normal;color:#007C65;line-height:17px;right:881.00px;">+100%<i class="bl"></i></div><div class="t" id="d1_4a" style="top:429.91px;font-size:17px;font-weight:normal;color:#191B23;line-height:17px;right:721.53px;">65<i class="bl"></i></div><div class="t" id="d1_4b" style="top:453.91px;font-size:17px;font-weight:normal;color:#D1002F;line-height:17px;right:719.64px;">-10%<i class="bl"></i></div><div class="t" id="d1_5a" style="top:429.91px;font-size:17px;font-weight:normal;color:#191B23;line-height:17px;right:540.99px;">5<i class="bl"></i></div><div class="t" id="d1_5b" style="top:453.91px;font-size:17px;font-weight:normal;color:#007C65;line-height:17px;right:539.00px;">+100%<i class="bl"></i></div><div class="t" id="d1_6a" style="top:429.91px;font-size:17px;font-weight:normal;color:#191B23;line-height:17px;right:324.27px;">00:00:00<i class="bl"></i></div><div class="t" id="d1_6b" style="top:453.91px;font-size:17px;font-weight:normal;color:#64666F;line-height:17px;right:321.85px;">0<i class="bl"></i></div><div class="t" id="d1_7a" style="top:429.91px;font-size:17px;font-weight:normal;color:#191B23;line-height:17px;right:182.26px;">0.08<i class="bl"></i></div><div class="t" id="d1_7b" style="top:453.91px;font-size:17px;font-weight:normal;color:#007C65;line-height:17px;right:180.00px;">+100%<i class="bl"></i></div><div class="t" id="d1_8a" style="top:429.91px;font-size:17px;font-weight:normal;color:#191B23;line-height:17px;right:43.84px;">5<i class="bl"></i></div><div class="t" id="d1_8b" style="top:453.91px;font-size:17px;font-weight:normal;color:#007C65;line-height:17px;right:41.97px;">+100%<i class="bl"></i></div><div class="t" id="d2_0a" style="top:510.00px;font-size:17px;font-weight:normal;color:#0068C6;line-height:17px;right:1176.98px;">143<i class="bl"></i></div><div class="t" id="d2_0b" style="top:533.82px;font-size:17px;font-weight:normal;color:#64666F;line-height:17px;right:1176.85px;">0<i class="bl"></i></div><div class="t" id="d2_1a" style="top:510.00px;font-size:17px;font-weight:normal;color:#0068C6;line-height:17px;right:1059.09px;">284<i class="bl"></i></div><div class="t" id="d2_1b" style="top:533.82px;font-size:17px;font-weight:normal;color:#007C65;line-height:17px;right:1058.63px;">+13<i class="bl"></i></div><div class="t" id="d2_2a" style="top:508.91px;font-size:17px;font-weight:normal;color:#191B23;line-height:17px;right:977.38px;">53<i class="bl"></i></div><div class="t" id="d2_2b" style="top:532.91px;font-size:17px;font-weight:normal;color:#D1002F;line-height:17px;right:975.71px;">-22%<i class="bl"></i></div><div class="t" id="d2_3a" style="top:508.91px;font-size:17px;font-weight:normal;color:#191B23;line-height:17px;right:882.41px;">52<i class="bl"></i></div><div class="t" id="d2_3b" style="top:532.91px;font-size:17px;font-weight:normal;color:#D1002F;line-height:17px;right:880.64px;">-20%<i class="bl"></i></div><div class="t" id="d2_4a" style="top:508.91px;font-size:17px;font-weight:normal;color:#191B23;line-height:17px;right:721.47px;">56<i class="bl"></i></div><div class="t" id="d2_4b" style="top:532.91px;font-size:17px;font-weight:normal;color:#D1002F;line-height:17px;right:719.64px;">-25%<i class="bl"></i></div><div class="t" id="d2_5a" style="top:508.91px;font-size:17px;font-weight:normal;color:#191B23;line-height:17px;right:540.41px;">33<i class="bl"></i></div><div class="t" id="d2_5b" style="top:532.91px;font-size:17px;font-weight:normal;color:#D1002F;line-height:17px;right:538.60px;">-21%<i class="bl"></i></div><div class="t" id="d2_6a" style="top:508.91px;font-size:17px;font-weight:normal;color:#191B23;line-height:17px;right:324.26px;">00:00:36<i class="bl"></i></div><div class="t" id="d2_6b" style="top:532.91px;font-size:17px;font-weight:normal;color:#007C65;line-height:17px;right:322.54px;">+16%<i class="bl"></i></div><div class="t" id="d2_7a" style="top:508.91px;font-size:17px;font-weight:normal;color:#191B23;line-height:17px;right:182.22px;">0.59<i class="bl"></i></div><div class="t" id="d2_7b" style="top:532.91px;font-size:17px;font-weight:normal;color:#007C65;line-height:17px;right:179.92px;">+5%<i class="bl"></i></div><div class="t" id="d2_8a" style="top:508.91px;font-size:17px;font-weight:normal;color:#191B23;line-height:17px;right:43.93px;">0<i class="bl"></i></div><div class="t" id="d2_8b" style="top:532.91px;font-size:17px;font-weight:normal;color:#D1002F;line-height:17px;right:42.37px;">-100%<i class="bl"></i></div><div class="t" id="d3_0a" style="top:589.00px;font-size:17px;font-weight:normal;color:#0068C6;line-height:17px;right:1176.98px;">103<i class="bl"></i></div><div class="t" id="d3_0b" style="top:612.82px;font-size:17px;font-weight:normal;color:#64666F;line-height:17px;right:1176.85px;">0<i class="bl"></i></div><div class="t" id="d3_1a" style="top:589.00px;font-size:17px;font-weight:normal;color:#0068C6;line-height:17px;right:1058.91px;">235<i class="bl"></i></div><div class="t" id="d3_1b" style="top:612.82px;font-size:17px;font-weight:normal;color:#D1002F;line-height:17px;right:1058.80px;">-19<i class="bl"></i></div><div class="t" id="d3_2a" style="top:587.91px;font-size:17px;font-weight:normal;color:#191B23;line-height:17px;right:977.49px;">25<i class="bl"></i></div><div class="t" id="d3_2b" style="top:611.91px;font-size:17px;font-weight:normal;color:#D1002F;line-height:17px;right:975.71px;">-26%<i class="bl"></i></div><div class="t" id="d3_3a" style="top:587.91px;font-size:17px;font-weight:normal;color:#191B23;line-height:17px;right:882.47px;">23<i class="bl"></i></div><div class="t" id="d3_3b" style="top:611.91px;font-size:17px;font-weight:normal;color:#D1002F;line-height:17px;right:880.64px;">-32%<i class="bl"></i></div><div class="t" id="d3_4a" style="top:587.91px;font-size:17px;font-weight:normal;color:#191B23;line-height:17px;right:721.47px;">26<i class="bl"></i></div><div class="t" id="d3_4b" style="top:611.91px;font-size:17px;font-weight:normal;color:#D1002F;line-height:17px;right:719.64px;">-28%<i class="bl"></i></div><div class="t" id="d3_5a" style="top:587.91px;font-size:17px;font-weight:normal;color:#191B23;line-height:17px;right:541.57px;">14<i class="bl"></i></div><div class="t" id="d3_5b" style="top:611.91px;font-size:17px;font-weight:normal;color:#D1002F;line-height:17px;right:538.60px;">-26%<i class="bl"></i></div><div class="t" id="d3_6a" style="top:587.91px;font-size:17px;font-weight:normal;color:#191B23;line-height:17px;right:324.27px;">00:02:00<i class="bl"></i></div><div class="t" id="d3_6b" style="top:611.91px;font-size:17px;font-weight:normal;color:#007C65;line-height:17px;right:322.54px;">+43%<i class="bl"></i></div><div class="t" id="d3_7a" style="top:587.91px;font-size:17px;font-weight:normal;color:#191B23;line-height:17px;right:182.22px;">0.54<i class="bl"></i></div><div class="t" id="d3_7b" style="top:611.91px;font-size:17px;font-weight:normal;color:#007C65;line-height:17px;right:179.92px;">+2%<i class="bl"></i></div><div class="t" id="d3_8a" style="top:587.91px;font-size:17px;font-weight:normal;color:#191B23;line-height:17px;right:43.93px;">0<i class="bl"></i></div><div class="t" id="d3_8b" style="top:611.91px;font-size:17px;font-weight:normal;color:#64666F;line-height:17px;right:41.98px;">0<i class="bl"></i></div><div class="t" id="d4_0a" style="top:668.00px;font-size:17px;font-weight:normal;color:#0068C6;line-height:17px;right:1177.49px;">78<i class="bl"></i></div><div class="t" id="d4_0b" style="top:691.82px;font-size:17px;font-weight:normal;color:#64666F;line-height:17px;right:1176.85px;">0<i class="bl"></i></div><div class="t" id="d4_1a" style="top:668.00px;font-size:17px;font-weight:normal;color:#0068C6;line-height:17px;right:1058.93px;">130<i class="bl"></i></div><div class="t" id="d4_1b" style="top:691.82px;font-size:17px;font-weight:normal;color:#D1002F;line-height:17px;right:1058.79px;">-37<i class="bl"></i></div><div class="t" id="d4_2a" style="top:666.91px;font-size:17px;font-weight:normal;color:#191B23;line-height:17px;right:977.44px;">21<i class="bl"></i></div><div class="t" id="d4_2b" style="top:690.91px;font-size:17px;font-weight:normal;color:#D1002F;line-height:17px;right:975.71px;">-28%<i class="bl"></i></div><div class="t" id="d4_3a" style="top:666.91px;font-size:17px;font-weight:normal;color:#191B23;line-height:17px;right:882.47px;">23<i class="bl"></i></div><div class="t" id="d4_3b" style="top:690.91px;font-size:17px;font-weight:normal;color:#D1002F;line-height:17px;right:880.64px;">-23%<i class="bl"></i></div><div class="t" id="d4_4a" style="top:666.91px;font-size:17px;font-weight:normal;color:#191B23;line-height:17px;right:722.59px;">24<i class="bl"></i></div><div class="t" id="d4_4b" style="top:690.91px;font-size:17px;font-weight:normal;color:#D1002F;line-height:17px;right:719.64px;">-23%<i class="bl"></i></div><div class="t" id="d4_5a" style="top:666.91px;font-size:17px;font-weight:normal;color:#191B23;line-height:17px;right:540.41px;">13<i class="bl"></i></div><div class="t" id="d4_5b" style="top:690.91px;font-size:17px;font-weight:normal;color:#D1002F;line-height:17px;right:538.60px;">-28%<i class="bl"></i></div><div class="t" id="d4_6a" style="top:666.91px;font-size:17px;font-weight:normal;color:#191B23;line-height:17px;right:324.29px;">00:00:21<i class="bl"></i></div><div class="t" id="d4_6b" style="top:690.91px;font-size:17px;font-weight:normal;color:#D1002F;line-height:17px;right:321.63px;">-40%<i class="bl"></i></div><div class="t" id="d4_7a" style="top:666.91px;font-size:17px;font-weight:normal;color:#191B23;line-height:17px;right:182.22px;">0.54<i class="bl"></i></div><div class="t" id="d4_7b" style="top:690.91px;font-size:17px;font-weight:normal;color:#D1002F;line-height:17px;right:180.07px;">-7%<i class="bl"></i></div><div class="t" id="d4_8a" style="top:666.91px;font-size:17px;font-weight:normal;color:#191B23;line-height:17px;right:43.93px;">0<i class="bl"></i></div><div class="t" id="d4_8b" style="top:690.91px;font-size:17px;font-weight:normal;color:#64666F;line-height:17px;right:41.98px;">0<i class="bl"></i></div><div class="t" id="d5_0a" style="top:747.00px;font-size:17px;font-weight:normal;color:#0068C6;line-height:17px;right:1177.56px;">13<i class="bl"></i></div><div class="t" id="d5_0b" style="top:770.82px;font-size:17px;font-weight:normal;color:#64666F;line-height:17px;right:1176.85px;">0<i class="bl"></i></div><div class="t" id="d5_1a" style="top:747.00px;font-size:17px;font-weight:normal;color:#0068C6;line-height:17px;right:1058.39px;">52<i class="bl"></i></div><div class="t" id="d5_1b" style="top:770.82px;font-size:17px;font-weight:normal;color:#007C65;line-height:17px;right:1059.08px;">+5<i class="bl"></i></div><div class="t" id="d5_2a" style="top:745.91px;font-size:17px;font-weight:normal;color:#191B23;line-height:17px;right:977.44px;">19<i class="bl"></i></div><div class="t" id="d5_2b" style="top:769.91px;font-size:17px;font-weight:normal;color:#007C65;line-height:17px;right:975.90px;">+533%<i class="bl"></i></div><div class="t" id="d5_3a" style="top:745.91px;font-size:17px;font-weight:normal;color:#191B23;line-height:17px;right:882.47px;">19<i class="bl"></i></div><div class="t" id="d5_3b" style="top:769.91px;font-size:17px;font-weight:normal;color:#007C65;line-height:17px;right:881.00px;">+533%<i class="bl"></i></div><div class="t" id="d5_4a" style="top:745.91px;font-size:17px;font-weight:normal;color:#191B23;line-height:17px;right:721.52px;">20<i class="bl"></i></div><div class="t" id="d5_4b" style="top:769.91px;font-size:17px;font-weight:normal;color:#007C65;line-height:17px;right:720.00px;">+567%<i class="bl"></i></div><div class="t" id="d5_5a" style="top:745.91px;font-size:17px;font-weight:normal;color:#191B23;line-height:17px;right:540.84px;">4<i class="bl"></i></div><div class="t" id="d5_5b" style="top:769.91px;font-size:17px;font-weight:normal;color:#007C65;line-height:17px;right:539.00px;">+100%<i class="bl"></i></div><div class="t" id="d5_6a" style="top:745.91px;font-size:17px;font-weight:normal;color:#191B23;line-height:17px;right:324.12px;">00:00:23<i class="bl"></i></div><div class="t" id="d5_6b" style="top:769.91px;font-size:17px;font-weight:normal;color:#D1002F;line-height:17px;right:321.63px;">-82%<i class="bl"></i></div><div class="t" id="d5_7a" style="top:745.91px;font-size:17px;font-weight:normal;color:#191B23;line-height:17px;right:181.64px;">0.2<i class="bl"></i></div><div class="t" id="d5_7b" style="top:769.91px;font-size:17px;font-weight:normal;color:#D1002F;line-height:17px;right:179.60px;">-70%<i class="bl"></i></div><div class="t" id="d5_8a" style="top:745.91px;font-size:17px;font-weight:normal;color:#191B23;line-height:17px;right:43.93px;">0<i class="bl"></i></div><div class="t" id="d5_8b" style="top:769.91px;font-size:17px;font-weight:normal;color:#64666F;line-height:17px;right:41.98px;">0<i class="bl"></i></div><div class="t" id="d6_0a" style="top:826.00px;font-size:17px;font-weight:normal;color:#0068C6;line-height:17px;right:1177.56px;">13<i class="bl"></i></div><div class="t" id="d6_0b" style="top:849.82px;font-size:17px;font-weight:normal;color:#64666F;line-height:17px;right:1176.85px;">0<i class="bl"></i></div><div class="t" id="d6_1a" style="top:826.00px;font-size:17px;font-weight:normal;color:#0068C6;line-height:17px;right:1058.54px;">31<i class="bl"></i></div><div class="t" id="d6_1b" style="top:849.82px;font-size:17px;font-weight:normal;color:#D1002F;line-height:17px;right:1059.26px;">-5<i class="bl"></i></div><div class="t" id="d6_2a" style="top:824.91px;font-size:17px;font-weight:normal;color:#191B23;line-height:17px;right:978.55px;">14<i class="bl"></i></div><div class="t" id="d6_2b" style="top:848.91px;font-size:17px;font-weight:normal;color:#D1002F;line-height:17px;right:975.71px;">-26%<i class="bl"></i></div><div class="t" id="d6_3a" style="top:824.91px;font-size:17px;font-weight:normal;color:#191B23;line-height:17px;right:882.47px;">13<i class="bl"></i></div><div class="t" id="d6_3b" style="top:848.91px;font-size:17px;font-weight:normal;color:#D1002F;line-height:17px;right:880.64px;">-28%<i class="bl"></i></div><div class="t" id="d6_4a" style="top:824.91px;font-size:17px;font-weight:normal;color:#191B23;line-height:17px;right:721.53px;">15<i class="bl"></i></div><div class="t" id="d6_4b" style="top:848.91px;font-size:17px;font-weight:normal;color:#D1002F;line-height:17px;right:719.64px;">-21%<i class="bl"></i></div><div class="t" id="d6_5a" style="top:824.91px;font-size:17px;font-weight:normal;color:#191B23;line-height:17px;right:540.83px;">9<i class="bl"></i></div><div class="t" id="d6_5b" style="top:848.91px;font-size:17px;font-weight:normal;color:#D1002F;line-height:17px;right:538.60px;">-31%<i class="bl"></i></div><div class="t" id="d6_6a" style="top:824.91px;font-size:17px;font-weight:normal;color:#191B23;line-height:17px;right:324.20px;">00:00:45<i class="bl"></i></div><div class="t" id="d6_6b" style="top:848.91px;font-size:17px;font-weight:normal;color:#007C65;line-height:17px;right:322.54px;">+29%<i class="bl"></i></div><div class="t" id="d6_7a" style="top:824.91px;font-size:17px;font-weight:normal;color:#191B23;line-height:17px;right:181.66px;">0.6<i class="bl"></i></div><div class="t" id="d6_7b" style="top:848.91px;font-size:17px;font-weight:normal;color:#D1002F;line-height:17px;right:179.60px;">-12%<i class="bl"></i></div><div class="t" id="d6_8a" style="top:824.91px;font-size:17px;font-weight:normal;color:#191B23;line-height:17px;right:43.93px;">0<i class="bl"></i></div><div class="t" id="d6_8b" style="top:848.91px;font-size:17px;font-weight:normal;color:#64666F;line-height:17px;right:41.98px;">0<i class="bl"></i></div></body></html>
